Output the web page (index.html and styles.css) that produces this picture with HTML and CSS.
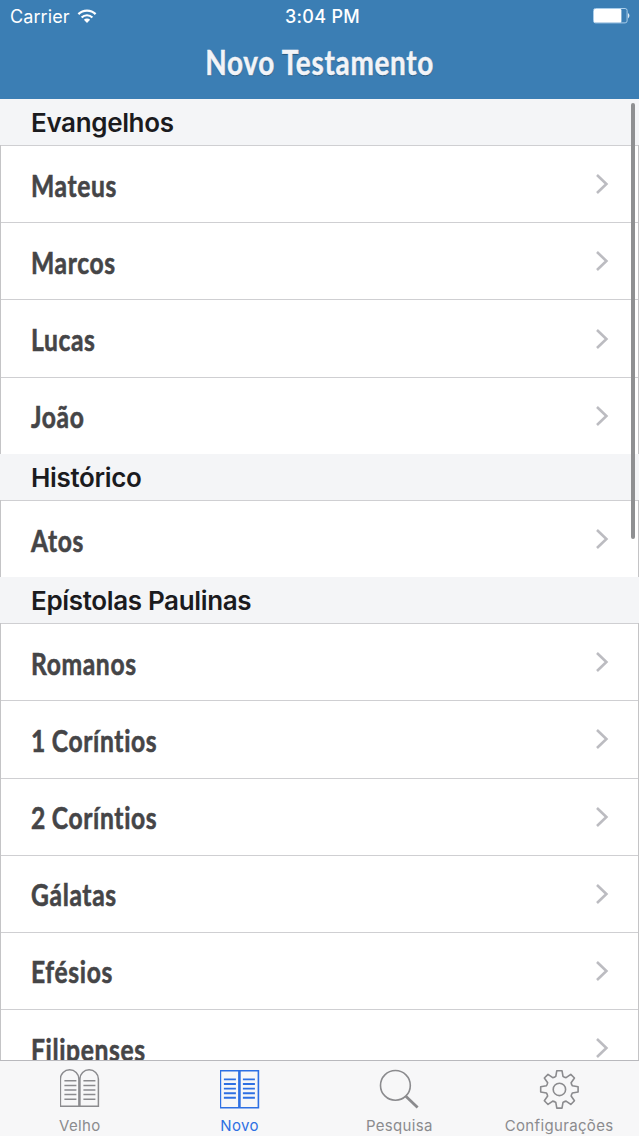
FILE: index.html
```html
<!DOCTYPE html>
<html lang="pt">
<head>
    <meta charset="UTF-8">
    <title>Novo Testamento</title>
    <link rel="stylesheet" href="styles.css">
</head>
<body>

<!-- chevron shared by all the rows -->
<svg class="defs">
    <symbol id="chevron" viewBox="0 0 14 22">
        <path d="M2 2 L11.4 11 L2 20" fill="none" stroke="#bcbcc1" stroke-width="2.6"/>
    </symbol>
</svg>

<div class="app">
    <header class="header">
        <div class="status">
            <div class="carrier">
                <span>Carrier</span>
                <svg width="20" height="15" viewBox="0 0 20 15">
                    <path d="M1.4 5.1 A12.2 12.2 0 0 1 18.6 5.1" fill="none" stroke="#fff" stroke-width="2.2"/>
                    <path d="M4.6 8.5 A7.6 7.6 0 0 1 15.4 8.5" fill="none" stroke="#fff" stroke-width="2.2"/>
                    <path d="M6.9 10.7 A4.4 4.4 0 0 1 13.1 10.7 L10 13.9 Z" fill="#fff"/>
                </svg>
            </div>
            <div class="time">3:04 PM</div>
            <svg class="battery" width="38" height="16" viewBox="0 0 38 16">
                <rect x="0.5" y="0.5" width="33.6" height="14.4" rx="2" fill="none" stroke="#a9cdea"/>
                <rect x="1" y="1" width="27.4" height="13.4" rx="1" fill="#fff"/>
                <path d="M35.2 5 Q37.6 7.7 35.2 10.4 Z" fill="#fff"/>
            </svg>
        </div>
        <h1 class="title"><span>Novo Testamento</span></h1>
    </header>

    <main class="list">
        <h2 class="section">Evangelhos</h2>
        <ul class="rows">
            <li class="row"><span class="name">Mateus</span><svg class="chevron"><use href="#chevron"/></svg></li>
            <li class="row"><span class="name">Marcos</span><svg class="chevron"><use href="#chevron"/></svg></li>
            <li class="row"><span class="name">Lucas</span><svg class="chevron"><use href="#chevron"/></svg></li>
            <li class="row"><span class="name">João</span><svg class="chevron"><use href="#chevron"/></svg></li>
        </ul>
        <h2 class="section">Histórico</h2>
        <ul class="rows">
            <li class="row"><span class="name">Atos</span><svg class="chevron"><use href="#chevron"/></svg></li>
        </ul>
        <h2 class="section">Epístolas Paulinas</h2>
        <ul class="rows">
            <li class="row"><span class="name">Romanos</span><svg class="chevron"><use href="#chevron"/></svg></li>
            <li class="row"><span class="name">1 Coríntios</span><svg class="chevron"><use href="#chevron"/></svg></li>
            <li class="row"><span class="name">2 Coríntios</span><svg class="chevron"><use href="#chevron"/></svg></li>
            <li class="row"><span class="name">Gálatas</span><svg class="chevron"><use href="#chevron"/></svg></li>
            <li class="row"><span class="name">Efésios</span><svg class="chevron"><use href="#chevron"/></svg></li>
            <li class="row"><span class="name">Filipenses</span><svg class="chevron"><use href="#chevron"/></svg></li>
        </ul>
        <div class="scrollbar"></div>
    </main>

    <nav class="tabs">
        <a class="tab">
            <svg width="40" height="40" viewBox="0.6 0 40 40">
                <path d="M1 37.3 V10 A9.2 9.2 0 0 1 19.5 10 V37.3 Z M20.5 37.3 V10 A9.2 9.2 0 0 1 39 10 V37.3 Z" stroke-width="1.5"/>
                <path d="M5 11.8 H17 M5 16.4 H17 M5 21 H17 M5 25.6 H17 M5 30.2 H17 M24 11.8 H36 M24 16.4 H36 M24 21 H36 M24 25.6 H36 M24 30.2 H36" stroke-width="1.5"/>
            </svg>
            <span>Velho</span>
        </a>
        <a class="tab active">
            <svg width="40" height="40" viewBox="0.6 0 40 40">
                <path d="M1 1.7 H39 V38.7 H1 Z" stroke-width="1.6"/>
                <path d="M20 1 V39" stroke-width="2.6"/>
                <path d="M4.5 10.4 H16.5 M4.5 15 H16.5 M4.5 19.6 H16.5 M4.5 24.2 H16.5 M4.5 28.8 H16.5 M23.5 10.4 H35.5 M23.5 15 H35.5 M23.5 19.6 H35.5 M23.5 24.2 H35.5 M23.5 28.8 H35.5" stroke-width="1.9"/>
            </svg>
            <span>Novo</span>
        </a>
        <a class="tab">
            <svg width="40" height="40" viewBox="0 0 40 40">
                <circle cx="16.4" cy="16.4" r="14.9" stroke-width="1.6"/>
                <path d="M26.8 27.2 L38.6 38.4" stroke-width="2.8"/>
            </svg>
            <span>Pesquisa</span>
        </a>
        <a class="tab">
            <svg width="40" height="40" viewBox="-20.4 -20.4 40 40">
                <path id="gear" stroke-width="1.6" stroke-linejoin="round"/>
                <circle cx="0" cy="0" r="6.2" stroke-width="1.6"/>
            </svg>
            <span>Configurações</span>
        </a>
    </nav>
</div>

<script>
    // Eight gear teeth, each with a flat tip and a curved foot
    const r = (x, y, a) => {
        const c = Math.cos(a), s = Math.sin(a);
        return (x * c - y * s).toFixed(2) + " " + (x * s + y * c).toFixed(2);
    };
    let d = "";
    for (let i = 0; i < 8; i++) {
        const a = i * Math.PI / 4;
        d += (i ? "L" : "M") + r(-3.6, -13, a) + "L" + r(-2.6, -18.7, a) + "L" + r(2.6, -18.7, a) + "L" + r(3.6, -13, a);
        d += "Q" + r(5, -12, a) + " " + r(-3.6, -13, a + Math.PI / 4);
    }
    document.getElementById("gear").setAttribute("d", d + "Z");
</script>

</body>
</html>
```
FILE: styles.css
```css
* {
    box-sizing: border-box;
}

body {
    margin: 0;
    font-family: Inter, "Liberation Sans", sans-serif;
    background: #fff;
}

.defs {
    display: none;
}

.app {
    width: 639px;
    height: 1136px;
    display: flex;
    flex-direction: column;
    overflow: hidden;
}

/* Top bar */
.header {
    flex: none;
    height: 99px;
    background: #3b7eb4;
    color: #fff;
}

.status {
    height: 32px;
    padding: 0 8px 0 10px;
    display: grid;
    grid-template-columns: 1fr auto 1fr;
    align-items: center;
    font-size: 18px;
}

.carrier {
    display: flex;
    gap: 7px;
    letter-spacing: 0.1px;
}

.carrier svg {
    margin-top: 3px;
}

.time {
    padding-left: 4px;
    font-weight: 500;
    letter-spacing: 0.3px;
}

.battery {
    justify-self: end;
}

.title {
    margin: 0;
    height: 60px;
    text-align: center;
    font: 700 34px/59px Lato, sans-serif;
    color: #f2f4f8;
    text-shadow: 0 1px 1px rgba(0, 0, 0, 0.35);
    -webkit-text-stroke: 0.5px #f2f4f8;
}

.title span {
    display: inline-block;
    letter-spacing: 0.9px;
    transform: scaleX(0.82);
}

/* List */
.list {
    position: relative;
    flex: 1;
    min-height: 0;
    overflow: hidden;
}

.section {
    margin: 0;
    height: 46.2px;
    padding-left: 31px;
    background: #f4f5f7;
    color: #1b1b1e;
    font-size: 26px;
    font-weight: 600;
    letter-spacing: -0.35px;
    line-height: 48px;
}

.rows {
    margin: 0;
    padding: 0;
    list-style: none;
    border-left: 1px solid #c4c4c6;
    border-right: 1px solid #c4c4c6;
}

.row {
    height: 77.15px;
    padding: 0 29px 0 30px;
    display: flex;
    align-items: center;
    justify-content: space-between;
    border-top: 1px solid #cfcfd2;
}

.name {
    margin-top: 1px;
    font: 700 31px/40px Lato, sans-serif;
    letter-spacing: 0.8px;
    word-spacing: -1px;
    color: #454547;
    -webkit-text-stroke: 0.6px #454547;
    transform: scaleX(0.795);
    transform-origin: left;
}

.chevron {
    width: 14px;
    height: 22px;
}

.scrollbar {
    position: absolute;
    top: 4px;
    right: 4px;
    width: 4px;
    height: 436px;
    border-radius: 2px;
    background: #8f9092;
}

/* Tab bar */
.tabs {
    flex: none;
    height: 76px;
    display: grid;
    grid-template-columns: repeat(4, 1fr);
    border-top: 1px solid #b9b9bd;
    background: #f7f7f8;
}

.tab {
    padding-top: 8px;
    display: flex;
    flex-direction: column;
    align-items: center;
    color: #8b8b8e;
    font-size: 15px;
    letter-spacing: 0.35px;
}

.tab svg {
    fill: none;
    stroke: currentColor;
}

.tab span {
    margin-top: 8px;
    line-height: 18px;
}

.active {
    color: #2e70e3;
}
```
